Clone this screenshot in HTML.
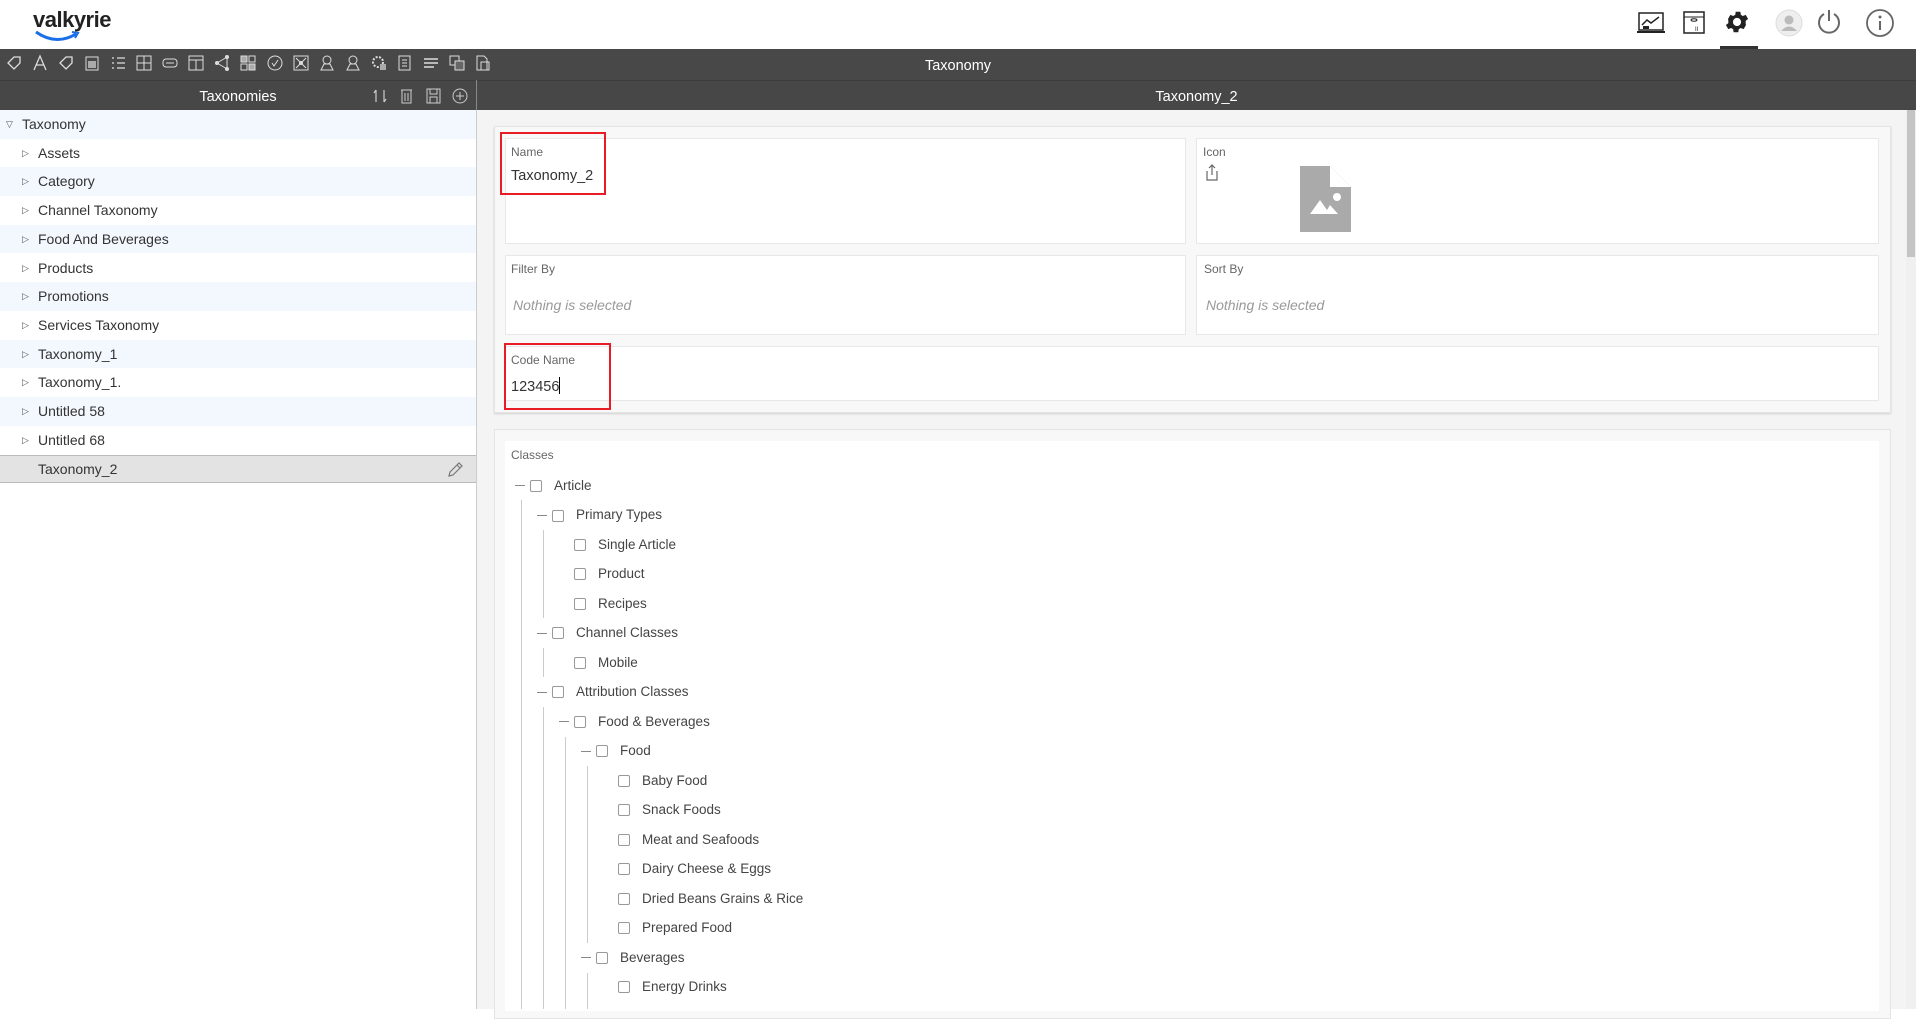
<!DOCTYPE html>
<html><head><meta charset="utf-8"><style>
*{margin:0;padding:0;box-sizing:border-box}
body{width:1916px;height:1009px;overflow:hidden;background:#fff;font-family:"Liberation Sans",sans-serif;position:relative;color:#333}
.a{position:absolute}
.tb svg{position:absolute;top:54px}
.row{position:absolute;left:0;width:476px;height:28.7px;font-size:14px;color:#333;line-height:28.7px}
.row .t{position:absolute;left:38px}
.row .ar{position:absolute;left:22px;font-size:9px;color:#555}
.lbl{position:absolute;font-size:12px;color:#666}
.box{position:absolute;background:#fff;border:1px solid #e8e8e8}
.r{position:absolute;height:28px;line-height:28px;font-size:13.5px;color:#444}
.cb{position:absolute;width:12px;height:12px;border:1.5px solid #999;border-radius:2px;background:#fff}
.ds{position:absolute;width:10px;height:1px;background:#888}
.vl{position:absolute;width:1px;background:#ccc}
</style></head><body>
<!-- header -->
<div class="a" style="left:33px;top:7px;font-size:22px;font-weight:600;color:#222;letter-spacing:-0.5px">valkyrie</div>
<svg class="a" style="left:34px;top:30px" width="46" height="14"><path d="M2 2 Q22 16 42 4" stroke="#1a6ee8" stroke-width="3" fill="none"/><path d="M38 2 L44 3 L41 8" stroke="#1a6ee8" stroke-width="2" fill="none"/></svg>
<svg class="a" style="left:1637px;top:11px" width="28" height="24"><rect x="2" y="2" width="24" height="17" fill="none" stroke="#222" stroke-width="1.5"/><path d="M5 14 L10 9 L14 12 L22 6" stroke="#222" fill="none" stroke-width="1.5"/><rect x="6" y="15" width="6" height="3" fill="#222"/><line x1="0" y1="21" x2="28" y2="21" stroke="#222" stroke-width="2"/></svg>
<svg class="a" style="left:1682px;top:9px" width="24" height="26"><rect x="2" y="3" width="20" height="21" fill="none" stroke="#222" stroke-width="1.5"/><line x1="2" y1="8" x2="22" y2="8" stroke="#222"/><ellipse cx="12" cy="11" rx="3" ry="1.2" fill="none" stroke="#222"/><text x="13" y="22" font-size="6" fill="#222">II</text></svg>
<svg class="a" style="left:1723px;top:8px" width="28" height="28" viewBox="0 0 24 24"><path fill="#222" d="M19.4 13a7.5 7.5 0 0 0 0-2l2.1-1.6-2-3.5-2.5 1a7 7 0 0 0-1.7-1l-.4-2.7h-4l-.4 2.7a7 7 0 0 0-1.7 1l-2.5-1-2 3.5L4.6 11a7.5 7.5 0 0 0 0 2l-2.1 1.6 2 3.5 2.5-1a7 7 0 0 0 1.7 1l.4 2.7h4l.4-2.7a7 7 0 0 0 1.7-1l2.5 1 2-3.5zM12 15.5a3.5 3.5 0 1 1 0-7 3.5 3.5 0 0 1 0 7z"/></svg>
<div class="a" style="left:1720px;top:46px;width:38px;height:3px;background:#333"></div>
<svg class="a" style="left:1775px;top:9px" width="28" height="28"><circle cx="14" cy="14" r="13" fill="#eee" stroke="#ddd"/><circle cx="14" cy="11" r="4.5" fill="#bbb"/><path d="M6 22 Q14 13 22 22" fill="#bbb"/></svg>
<svg class="a" style="left:1815px;top:8px" width="28" height="28"><path d="M9 6 A10 10 0 1 0 19 6" fill="none" stroke="#666" stroke-width="2"/><line x1="14" y1="2" x2="14" y2="13" stroke="#666" stroke-width="2"/></svg>
<svg class="a" style="left:1865px;top:8px" width="30" height="30"><circle cx="15" cy="15" r="13" fill="none" stroke="#666" stroke-width="1.8"/><circle cx="15" cy="9" r="1.5" fill="#666"/><line x1="15" y1="13" x2="15" y2="22" stroke="#666" stroke-width="2"/></svg>
<!-- dark bars -->
<div class="a" style="left:0;top:49px;width:1916px;height:32px;background:#484848"></div>
<div class="a" style="left:0;top:80px;width:1916px;height:30px;background:#474747;border-top:1px solid #3c3c3c"></div>
<div class="a" style="left:0;top:58px;width:1916px;text-align:center;color:#fff;font-size:14.5px">Taxonomy</div>
<div class="a" style="left:0;top:89px;width:476px;text-align:center;color:#fff;font-size:14.5px">Taxonomies</div>
<div class="a" style="left:477px;top:89px;width:1439px;text-align:center;color:#fff;font-size:14.5px">Taxonomy_2</div>
<div class="a" style="left:476px;top:80px;width:1px;height:30px;background:#888"></div>
<div class="tb">
<svg style="left:5px" width="18" height="18"><path d="M3 9 L9 3 L15 3 L15 9 L9 15 Z" fill="none" stroke="#ddd" stroke-width="1.3"/></svg>
<svg style="left:31px" width="18" height="18"><path d="M3 16 L9 2 L15 16 M5 11 H13" fill="none" stroke="#ddd" stroke-width="1.3"/></svg>
<svg style="left:57px" width="18" height="18"><path d="M3 9 L9 3 L15 3 L15 9 L9 15 Z" fill="none" stroke="#ddd" stroke-width="1.3"/></svg>
<svg style="left:83px" width="18" height="18"><rect x="3" y="3" width="12" height="13" fill="none" stroke="#ddd"/><rect x="5" y="7" width="8" height="7" fill="#aaa"/></svg>
<svg style="left:109px" width="18" height="18"><path d="M3 4h2M8 4h8M3 9h2M8 9h8M3 14h2M8 14h8" stroke="#ddd" stroke-width="1.3"/></svg>
<svg style="left:135px" width="18" height="18"><rect x="2" y="2" width="14" height="14" fill="none" stroke="#ddd"/><path d="M2 9H16M9 2V16" stroke="#ddd"/></svg>
<svg style="left:161px" width="18" height="18"><rect x="2" y="5" width="14" height="8" rx="3" fill="none" stroke="#ddd"/><path d="M5 9H13" stroke="#ddd"/></svg>
<svg style="left:187px" width="18" height="18"><rect x="2" y="2" width="14" height="14" fill="none" stroke="#ddd"/><path d="M2 6H16M9 6V16" stroke="#ddd"/></svg>
<svg style="left:213px" width="18" height="18"><circle cx="4" cy="9" r="2" fill="#ddd"/><circle cx="14" cy="3" r="2" fill="#ddd"/><circle cx="14" cy="15" r="2" fill="#ddd"/><path d="M4 9L14 3M4 9L14 15M14 3V15" stroke="#ddd"/></svg>
<svg style="left:239px" width="18" height="18"><rect x="2" y="2" width="6" height="6" fill="#aaa" stroke="#ddd"/><rect x="10" y="2" width="6" height="6" fill="none" stroke="#ddd"/><rect x="2" y="10" width="6" height="6" fill="none" stroke="#ddd"/><rect x="10" y="10" width="6" height="6" fill="#aaa" stroke="#ddd"/></svg>
<svg style="left:266px" width="18" height="18"><circle cx="9" cy="9" r="7" fill="none" stroke="#ddd"/><path d="M6 9L8 12L12 6" fill="none" stroke="#ddd"/></svg>
<svg style="left:292px" width="18" height="18"><rect x="2" y="2" width="14" height="14" fill="none" stroke="#ddd"/><circle cx="9" cy="9" r="2" fill="#ddd"/><path d="M4 4L14 14M14 4L4 14" stroke="#ddd"/></svg>
<svg style="left:318px" width="18" height="18"><circle cx="9" cy="6" r="4" fill="none" stroke="#ddd"/><path d="M3 16H15L12 10H6Z" fill="none" stroke="#ddd"/></svg>
<svg style="left:344px" width="18" height="18"><circle cx="9" cy="6" r="4" fill="none" stroke="#ddd"/><path d="M3 16H15L12 10H6Z" fill="none" stroke="#ddd"/></svg>
<svg style="left:370px" width="18" height="18"><circle cx="8" cy="8" r="5" fill="none" stroke="#ddd" stroke-width="2" stroke-dasharray="2 1.5"/><rect x="10" y="10" width="6" height="6" fill="#aaa"/></svg>
<svg style="left:396px" width="18" height="18"><rect x="3" y="2" width="11" height="14" fill="none" stroke="#ddd"/><path d="M6 6H11M6 9H11M6 12H11" stroke="#ddd"/></svg>
<svg style="left:422px" width="18" height="18"><path d="M2 5H16M2 9H16M2 13H12" stroke="#ddd" stroke-width="1.5"/></svg>
<svg style="left:448px" width="18" height="18"><rect x="2" y="2" width="9" height="9" fill="none" stroke="#ddd"/><rect x="7" y="7" width="9" height="9" fill="#666" stroke="#ddd"/></svg>
<svg style="left:474px" width="18" height="18"><path d="M3 2H10L13 5V16H3Z" fill="none" stroke="#ddd"/><path d="M7 8H15V16H7Z" fill="none" stroke="#ddd"/></svg>
</div>
<svg class="a" style="left:372px;top:86px" width="100" height="20"><path d="M4 4V16M4 4L2 7M12 16V4M12 16L14 13" stroke="#ccc" fill="none" stroke-width="1.2"/><rect x="30" y="4" width="9" height="13" fill="none" stroke="#ccc"/><path d="M29 4H40M33 7V15M36 7V15" stroke="#ccc"/><rect x="55" y="3" width="13" height="14" fill="none" stroke="#ccc"/><rect x="58" y="3" width="7" height="5" fill="none" stroke="#ccc"/><rect x="58" y="11" width="7" height="6" fill="none" stroke="#ccc"/><circle cx="88" cy="10" r="7" fill="none" stroke="#ccc"/><path d="M84 10H92M88 6V14" stroke="#ccc"/></svg>
<!-- left tree -->
<div class="a" style="left:476px;top:110px;width:1px;height:899px;background:#ccc"></div>
<div class="row" style="top:110px;background:#f3f8fe"><span class="ar" style="left:6px">▽</span><span class="t" style="left:22px">Taxonomy</span></div>
<div class="row" style="top:138.7px"><span class="ar">▷</span><span class="t">Assets</span></div>
<div class="row" style="top:167.4px;background:#f3f8fe"><span class="ar">▷</span><span class="t">Category</span></div>
<div class="row" style="top:196.1px"><span class="ar">▷</span><span class="t">Channel Taxonomy</span></div>
<div class="row" style="top:224.8px;background:#f3f8fe"><span class="ar">▷</span><span class="t">Food And Beverages</span></div>
<div class="row" style="top:253.5px"><span class="ar">▷</span><span class="t">Products</span></div>
<div class="row" style="top:282.2px;background:#f3f8fe"><span class="ar">▷</span><span class="t">Promotions</span></div>
<div class="row" style="top:310.9px"><span class="ar">▷</span><span class="t">Services Taxonomy</span></div>
<div class="row" style="top:339.6px;background:#f3f8fe"><span class="ar">▷</span><span class="t">Taxonomy_1</span></div>
<div class="row" style="top:368.3px"><span class="ar">▷</span><span class="t">Taxonomy_1.</span></div>
<div class="row" style="top:397px;background:#f3f8fe"><span class="ar">▷</span><span class="t">Untitled 58</span></div>
<div class="row" style="top:425.7px"><span class="ar">▷</span><span class="t">Untitled 68</span></div>
<div class="row" style="top:455px;background:#e3e3e3;border-top:1px solid #bbb;border-bottom:1px solid #bbb;height:28px;line-height:26px"><span class="t">Taxonomy_2</span>
<svg style="position:absolute;left:447px;top:6px" width="16" height="16"><path d="M2 14L3 10L12 1L15 4L6 13Z M10 3L13 6" fill="none" stroke="#777" stroke-width="1.2"/></svg></div>
<!-- right -->
<div class="a" style="left:477px;top:110px;width:1429px;height:899px;background:#f4f4f4"></div>
<div class="a" style="left:1906px;top:110px;width:10px;height:899px;background:#f0f0f0"></div>
<div class="a" style="left:1907px;top:110px;width:8px;height:147px;background:#c4c4c4"></div>
<div class="box" style="left:494px;top:126px;width:1397px;height:287px;background:#f8f8f8;box-shadow:0 1px 2px rgba(0,0,0,.15);border-color:#e4e4e4"></div>
<div class="box" style="left:505px;top:138px;width:681px;height:106px"></div>
<div class="box" style="left:1196px;top:138px;width:683px;height:106px"></div>
<div class="box" style="left:505px;top:255px;width:681px;height:80px"></div>
<div class="box" style="left:1196px;top:255px;width:683px;height:80px"></div>
<div class="box" style="left:505px;top:346px;width:1374px;height:55px"></div>
<div class="lbl" style="left:511px;top:145px">Name</div>
<div class="a" style="left:511px;top:168px;font-size:14.5px;color:#333">Taxonomy_2</div>
<div class="a" style="left:500px;top:132px;width:106px;height:63px;border:2.5px solid #e81c24"></div>
<div class="lbl" style="left:1203px;top:145px">Icon</div>
<svg class="a" style="left:1205px;top:164px" width="14" height="18"><path d="M2 7V16H12V7M7 1V11M4 4L7 1L10 4" fill="none" stroke="#666" stroke-width="1.2"/></svg>
<svg class="a" style="left:1300px;top:166px" width="51" height="66"><path d="M0 0H30L51 21V66H0Z" fill="#aaa"/><path d="M30 0V21H51Z" fill="#fff"/><circle cx="37" cy="31" r="4" fill="#fff"/><path d="M10 48L20 34L27 44L30 39L38 48Z" fill="#fff"/></svg>
<div class="lbl" style="left:511px;top:262px">Filter By</div>
<div class="a" style="left:513px;top:297px;font-size:14px;color:#999;font-style:italic">Nothing is selected</div>
<div class="lbl" style="left:1204px;top:262px">Sort By</div>
<div class="a" style="left:1206px;top:297px;font-size:14px;color:#999;font-style:italic">Nothing is selected</div>
<div class="lbl" style="left:511px;top:353px">Code Name</div>
<div class="a" style="left:511px;top:377px;font-size:14.5px;color:#333">123456<span style="display:inline-block;width:1px;height:17px;background:#000;vertical-align:-3px"></span></div>
<div class="a" style="left:504px;top:343px;width:107px;height:67px;border:2.5px solid #e81c24"></div>
<!-- classes -->
<div class="box" style="left:494px;top:429px;width:1397px;height:590px;background:#f8f8f8;border-color:#e4e4e4"></div>
<div class="box" style="left:505px;top:441px;width:1374px;height:570px;border:none"></div>
<div class="lbl" style="left:511px;top:448px">Classes</div>
<div class="vl" style="left:521px;top:500px;height:509px"></div>
<div class="vl" style="left:543px;top:530px;height:88px"></div>
<div class="vl" style="left:543px;top:648px;height:29px"></div>
<div class="vl" style="left:543px;top:707px;height:302px"></div>
<div class="vl" style="left:565px;top:737px;height:272px"></div>
<div class="vl" style="left:587px;top:766px;height:177px"></div>
<div class="vl" style="left:587px;top:973px;height:36px"></div>
<div class="ds" style="left:515px;top:485px"></div><div class="cb" style="left:530px;top:480px"></div><div class="r" style="left:554px;top:472px">Article</div>
<div class="ds" style="left:537px;top:515px"></div><div class="cb" style="left:552px;top:510px"></div><div class="r" style="left:576px;top:501px">Primary Types</div>
<div class="cb" style="left:574px;top:539px"></div><div class="r" style="left:598px;top:531px">Single Article</div>
<div class="cb" style="left:574px;top:568px"></div><div class="r" style="left:598px;top:560px">Product</div>
<div class="cb" style="left:574px;top:598px"></div><div class="r" style="left:598px;top:590px">Recipes</div>
<div class="ds" style="left:537px;top:633px"></div><div class="cb" style="left:552px;top:627px"></div><div class="r" style="left:576px;top:619px">Channel Classes</div>
<div class="cb" style="left:574px;top:657px"></div><div class="r" style="left:598px;top:649px">Mobile</div>
<div class="ds" style="left:537px;top:692px"></div><div class="cb" style="left:552px;top:686px"></div><div class="r" style="left:576px;top:678px">Attribution Classes</div>
<div class="ds" style="left:559px;top:721px"></div><div class="cb" style="left:574px;top:716px"></div><div class="r" style="left:598px;top:708px">Food &amp; Beverages</div>
<div class="ds" style="left:581px;top:751px"></div><div class="cb" style="left:596px;top:745px"></div><div class="r" style="left:620px;top:737px">Food</div>
<div class="cb" style="left:618px;top:775px"></div><div class="r" style="left:642px;top:767px">Baby Food</div>
<div class="cb" style="left:618px;top:804px"></div><div class="r" style="left:642px;top:796px">Snack Foods</div>
<div class="cb" style="left:618px;top:834px"></div><div class="r" style="left:642px;top:826px">Meat and Seafoods</div>
<div class="cb" style="left:618px;top:863px"></div><div class="r" style="left:642px;top:855px">Dairy Cheese &amp; Eggs</div>
<div class="cb" style="left:618px;top:893px"></div><div class="r" style="left:642px;top:885px">Dried Beans Grains &amp; Rice</div>
<div class="cb" style="left:618px;top:922px"></div><div class="r" style="left:642px;top:914px">Prepared Food</div>
<div class="ds" style="left:581px;top:957px"></div><div class="cb" style="left:596px;top:952px"></div><div class="r" style="left:620px;top:944px">Beverages</div>
<div class="cb" style="left:618px;top:981px"></div><div class="r" style="left:642px;top:973px">Energy Drinks</div>
</body></html>
